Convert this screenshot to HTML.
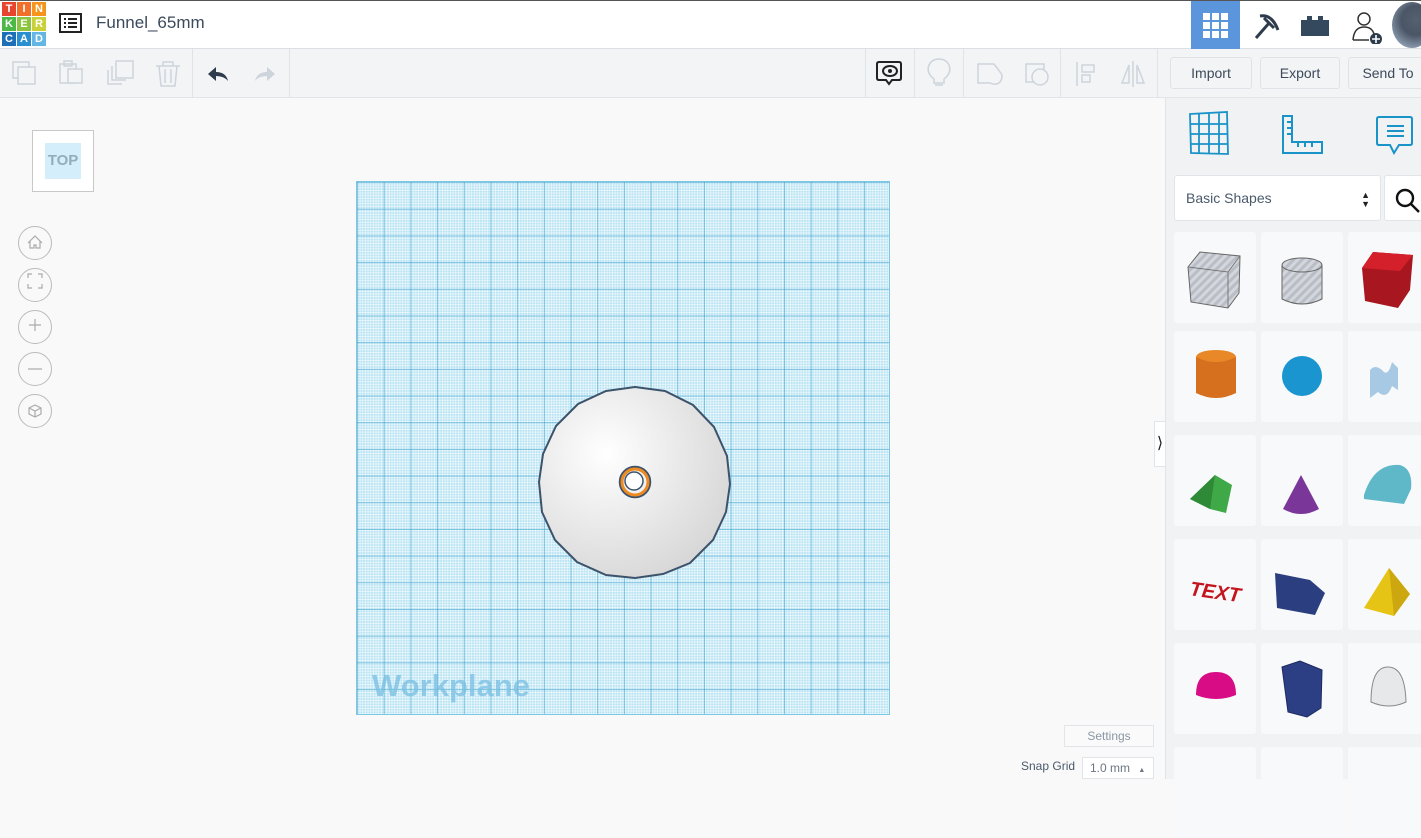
<!DOCTYPE html>
<html><head><meta charset="utf-8"><style>
*{box-sizing:border-box;margin:0;padding:0}
body{width:1421px;height:779px;overflow:hidden;background:#f9f9f9;font-family:"Liberation Sans",sans-serif;position:relative}
.abs{position:absolute}
#top{left:0;top:0;width:1421px;height:49px;background:#fff;border-top:1px solid #555;border-bottom:1px solid #dcdfe3}
#tb{left:0;top:49px;width:1421px;height:49px;background:#f3f4f6;border-bottom:1px solid #e1e4e8}
.logo div{position:absolute;width:14px;height:14px;color:#fff;font-size:11px;font-weight:bold;text-align:center;line-height:14px}
.btn{position:absolute;top:57px;height:32px;border:1px solid #dfe2e6;border-radius:3px;background:#f3f4f6;color:#3c4a5a;font-size:14px;text-align:center;line-height:30px}
.sep{position:absolute;top:49px;width:1px;height:48px;background:#e0e3e7}
#panel{left:1165px;top:98px;width:256px;height:681px;background:#f1f2f4;border-left:1px solid #e1e4e8}
.tile{position:absolute;width:82px;height:91px;background:#f8f9fa;border-radius:3px}
.circ{position:absolute;left:18px;width:34px;height:34px;border:1px solid #bbb;border-radius:50%;background:#f9f9f9}
#grid{left:356px;top:181px;width:534px;height:534px;border:1px solid #7cc7e3;
background-color:#b8e3f3;
background-image:
linear-gradient(to right,rgba(40,150,200,.5) 1px,transparent 1px),
linear-gradient(to bottom,rgba(40,150,200,.5) 1px,transparent 1px),
linear-gradient(to right,rgba(255,255,255,.6) 1px,transparent 1px),
linear-gradient(to bottom,rgba(255,255,255,.6) 1px,transparent 1px);
background-size:26.7px 26.7px,26.7px 26.7px,2.67px 2.67px,2.67px 2.67px}
</style></head><body>
<div id="top" class="abs"></div>
<div class="abs logo" style="left:2px;top:2px;width:44px;height:44px">
<div style="left:0;top:0;background:#e8452f">T</div><div style="left:15px;top:0;background:#f26f2a">I</div><div style="left:30px;top:0;background:#f7941e">N</div>
<div style="left:0;top:15px;background:#4cb848">K</div><div style="left:15px;top:15px;background:#8bc43f">E</div><div style="left:30px;top:15px;background:#c9d13a">R</div>
<div style="left:0;top:30px;background:#1d6fb8">C</div><div style="left:15px;top:30px;background:#2a8fd0">A</div><div style="left:30px;top:30px;background:#64b6e5">D</div>
</div>
<svg class="abs" style="left:59px;top:13px" width="23" height="20"><rect x="1" y="1" width="21" height="18" fill="none" stroke="#222" stroke-width="2"/><g fill="#222"><rect x="5" y="5" width="2" height="2"/><rect x="9" y="5" width="9" height="2"/><rect x="5" y="9" width="2" height="2"/><rect x="9" y="9" width="9" height="2"/><rect x="5" y="13" width="2" height="2"/><rect x="9" y="13" width="9" height="2"/></g></svg>
<div class="abs" style="left:96px;top:13px;font-size:17px;color:#3b4a5c">Funnel_65mm</div>
<div class="abs" style="left:1191px;top:1px;width:49px;height:48px;background:#5b95dc"></div>
<svg class="abs" style="left:1203px;top:13px" width="25" height="25"><g fill="#fff"><rect x="0" y="0" width="7" height="7"/><rect x="9" y="0" width="7" height="7"/><rect x="18" y="0" width="7" height="7"/><rect x="0" y="9" width="7" height="7"/><rect x="9" y="9" width="7" height="7"/><rect x="18" y="9" width="7" height="7"/><rect x="0" y="18" width="7" height="7"/><rect x="9" y="18" width="7" height="7"/><rect x="18" y="18" width="7" height="7"/></g></svg>
<svg class="abs" style="left:1250px;top:10px" width="32" height="32"><path d="M6 28 L20 12 M10 6 Q22 4 28 20 M14 8 L24 18" stroke="#2d3b4c" stroke-width="3" fill="none"/></svg>
<svg class="abs" style="left:1301px;top:14px" width="28" height="22"><path d="M0 6h6v-4h5v4h6v-4h5v4h6v16h-28z" fill="#34495e"/></svg>
<svg class="abs" style="left:1352px;top:10px" width="36" height="34"><circle cx="12" cy="9" r="6" fill="none" stroke="#333" stroke-width="1.5"/><path d="M1 30 Q2 17 12 17 Q20 17 22 24 M1 30h16" fill="none" stroke="#333" stroke-width="1.5"/><circle cx="24" cy="29" r="6" fill="#2d3b4c"/><path d="M24 25v8M20 29h8" stroke="#fff" stroke-width="1.6"/></svg>
<div class="abs" style="left:1392px;top:2px;width:40px;height:46px;border-radius:50%;background:radial-gradient(circle at 60% 40%,#556070 0,#4a5565 40%,#8796aa 75%)"></div>
<div id="tb" class="abs"></div>
<svg class="abs" style="left:0;top:55px" width="300" height="36" fill="none" stroke="#cdd4dc" stroke-width="1.5">
<rect x="13" y="7" width="16" height="16"/><rect x="18" y="12" width="17" height="17" fill="#f3f4f6"/>
<rect x="60" y="9" width="16" height="19"/><rect x="64" y="6" width="8" height="5"/><rect x="68" y="14" width="14" height="14" fill="#f3f4f6"/>
<path d="M108 15v14h14M112 11v14h14"/><rect x="116" y="6" width="17" height="17" fill="#f3f4f6"/>
<path d="M156 11h24M163 11v-4h10v4M159 11l2 20h14l2-20M165 14v14M171 14v14"/>
<path d="M208 19 L216 12 V17 Q226 17 228 26 Q224 21 216 21 V26Z" fill="#2d3b4c" stroke="none"/>
<path d="M275 19 L267 12 V17 Q257 17 255 26 Q259 21 267 21 V26Z" fill="#cdd4dc" stroke="none"/>
</svg>
<div class="sep" style="left:192px"></div><div class="sep" style="left:289px"></div>
<div class="sep" style="left:865px"></div><div class="sep" style="left:914px"></div><div class="sep" style="left:963px"></div><div class="sep" style="left:1060px"></div><div class="sep" style="left:1157px"></div>
<svg class="abs" style="left:870px;top:55px" width="290" height="38" fill="none" stroke="#cdd4dc" stroke-width="1.5">
<path d="M9 7h20q2 0 2 2v14q0 2-2 2h-7l-3 4-3-4h-7q-2 0-2-2v-14q0-2 2-2z" stroke="#222" stroke-width="2"/><ellipse cx="20" cy="16" rx="7" ry="5" stroke="#222" stroke-width="2"/><circle cx="20" cy="16" r="2" fill="#222" stroke="none"/>
<path d="M64 24q-8-6-5-14 3-6 10-6 7 0 10 6 3 8-5 14v4h-10z M65 30h8"/>
<path d="M108 9h16q4 5 6 8 4 4 0 10-4 4-10 1h-12z"/>
<rect x="156" y="9" width="18" height="18"/><circle cx="170" cy="22" r="8" fill="#f3f4f6"/>
<path d="M207 7v24M212 10h12v7h-12zM212 20h8v7h-8z"/>
<path d="M263 6v26M259 28l-7 0 7-18zM267 28h7l-7-18z"/>
</svg>
<div class="btn" style="left:1170px;width:82px">Import</div>
<div class="btn" style="left:1260px;width:80px">Export</div>
<div class="btn" style="left:1348px;width:80px">Send To</div>
<div class="abs" style="left:32px;top:130px;width:62px;height:62px;border:1px solid #c8c8c8;background:#fff"></div>
<div class="abs" style="left:45px;top:143px;width:36px;height:36px;background:#d4eefb;color:#93aebb;font-weight:bold;font-size:15px;text-align:center;line-height:36px">TOP</div>
<div class="circ" style="top:226px"></div><div class="circ" style="top:268px"></div><div class="circ" style="top:310px"></div><div class="circ" style="top:352px"></div><div class="circ" style="top:394px"></div>
<svg class="abs" style="left:18px;top:226px" width="34" height="204" fill="none" stroke="#aaa" stroke-width="1.2">
<path d="M10 17l7-7 7 7M12 15v7h4v-3h2v3h4v-7"/>
<path d="M10 52v-4h4M20 48h4v4M24 58v4h-4M14 62h-4v-4"/>
<path d="M17 93v12M11 99h12"/>
<path d="M10 143h14"/>
<path d="M17 179l6 3v6l-6 3-6-3v-6zM11 182l6 3 6-3M17 185v6"/>
</svg>
<div id="grid" class="abs"></div>
<div class="abs" style="left:372px;top:668px;font-size:31px;font-weight:bold;color:rgba(120,190,225,.75)">Workplane</div>
<svg class="abs" style="left:530px;top:380px" width="210" height="205">
<defs><radialGradient id="g" cx="0.35" cy="0.35" r="0.8"><stop offset="0" stop-color="#fff"/><stop offset="1" stop-color="#d2d2d2"/></radialGradient></defs>
<polygon points="105,7 135,11 163,25 184,47 197,76 200,104 196,132 183,160 160,183 133,194 105,198 76,195 47,182 25,160 12,132 9,102 13,74 26,46 48,24 76,11" fill="url(#g)" stroke="#3c536b" stroke-width="2"/>
<circle cx="105" cy="102" r="15" fill="none" stroke="#3c536b" stroke-width="2.5"/>
<circle cx="105" cy="102" r="13" fill="none" stroke="#ee8a22" stroke-width="3"/>
<circle cx="104" cy="101" r="9" fill="#fff" stroke="#3c536b" stroke-width="1.5"/>
</svg>
<div class="abs" style="left:1064px;top:725px;width:90px;height:22px;border:1px solid #e1e4e8;background:#fafafa;color:#8a96a3;font-size:12px;text-align:center;line-height:20px">Settings</div>
<div class="abs" style="left:1021px;top:759px;font-size:12px;color:#4a5a6b">Snap Grid</div>
<div class="abs" style="left:1082px;top:757px;width:72px;height:22px;border:1px solid #e1e4e8;background:#fff;color:#6a7683;font-size:12px;line-height:20px;padding-left:7px">1.0 mm <span style="font-size:7px;margin-left:5px">▲</span></div>
<div class="abs" style="left:1154px;top:421px;width:12px;height:46px;background:#fff;border:1px solid #e1e4e8;font-size:16px;line-height:44px;text-align:center;color:#222">&#x27E9;</div>
<div id="panel" class="abs"></div>
<svg class="abs" style="left:1185px;top:110px" width="230" height="50" fill="none" stroke="#1a93c9" stroke-width="2">
<path d="M5 4l37-2 1 42-37-1z M5 14h38M5 24h38M5 34h38M14 3v41M24 3v41M34 3v41" stroke-width="1.8"/>
<path d="M98 6h9v26h30v11h-39z M102 12h5M102 18h5M102 24h5M113 32v5M120 32v5M127 32v5"/>
<path d="M194 7h31q2 0 2 2v24q0 2-2 2h-11l-5 8-4-8h-11q-2 0-2-2v-24q0-2 2-2z M202 16h17M202 21h17M202 26h17"/>
</svg>
<div class="abs" style="left:1174px;top:175px;width:207px;height:46px;background:#fff;border:1px solid #e1e4e8;border-radius:3px;color:#4a5a6b;font-size:14px;line-height:44px;padding-left:11px">Basic Shapes<span style="position:absolute;right:10px;top:0;font-size:9px;line-height:9px;margin-top:15px;color:#222">▲<br>▼</span></div>
<div class="abs" style="left:1384px;top:175px;width:40px;height:46px;background:#fff;border:1px solid #e1e4e8;border-radius:3px"></div>
<svg class="abs" style="left:1394px;top:187px" width="27" height="26" fill="none" stroke="#111" stroke-width="2.4"><circle cx="11" cy="11" r="8"/><path d="M17 17l8 8"/></svg>
<div class="tile" style="left:1174px;top:232px"></div><div class="tile" style="left:1261px;top:232px"></div><div class="tile" style="left:1348px;top:232px"></div>
<div class="tile" style="left:1174px;top:331px"></div><div class="tile" style="left:1261px;top:331px"></div><div class="tile" style="left:1348px;top:331px"></div>
<div class="tile" style="left:1174px;top:435px"></div><div class="tile" style="left:1261px;top:435px"></div><div class="tile" style="left:1348px;top:435px"></div>
<div class="tile" style="left:1174px;top:539px"></div><div class="tile" style="left:1261px;top:539px"></div><div class="tile" style="left:1348px;top:539px"></div>
<div class="tile" style="left:1174px;top:643px"></div><div class="tile" style="left:1261px;top:643px"></div><div class="tile" style="left:1348px;top:643px"></div>
<div class="tile" style="left:1174px;top:747px"></div><div class="tile" style="left:1261px;top:747px"></div><div class="tile" style="left:1348px;top:747px"></div>
<svg class="abs" style="left:1160px;top:230px" width="261" height="549">
<defs><pattern id="st" width="6" height="6" patternUnits="userSpaceOnUse" patternTransform="rotate(45)"><rect width="6" height="6" fill="#d3d6dc"/><rect width="3" height="6" fill="#b9bdc5"/></pattern></defs>
<polygon points="28,37 40,22 80,26 79,63 68,78 31,72" fill="url(#st)" stroke="#666"/><path d="M28 37l40 5 12-16M68 42v36" fill="none" stroke="#777"/>
<path d="M122 35v34q20 10 40 0v-34" fill="url(#st)" stroke="#666"/><ellipse cx="142" cy="35" rx="20" ry="7" fill="url(#st)" stroke="#666"/>
<polygon points="202,38 213,22 253,25 250,60 238,78 205,71" fill="#a8161f"/><polygon points="202,38 213,22 253,25 240,41" fill="#d4202a"/>
<ellipse cx="56" cy="127" rx="20" ry="7" fill="#e88828"/><path d="M36 127v36q20 10 40 0v-36q-20 10-40 0" fill="#d7701e"/>
<circle cx="142" cy="146" r="20" fill="#1a95cf"/>
<path d="M210 140q5-6 12 0 6 8 10-8l6 6v22l-6-4q-5 14-14 6l-8 6z" fill="#a8c9e3"/>
<polygon points="30,269 55,245 72,255 66,283 50,279" fill="#3fa847"/><polygon points="30,269 55,245 50,279" fill="#2f8a38"/>
<path d="M141 245l-18 34q18 10 36 0z" fill="#7a3799"/>
<path d="M204 265q10-32 36-30 13 4 11 24l-7 15-40-5z" fill="#5fb8c7"/>
<text x="30" y="368" font-family="Liberation Sans" font-weight="bold" font-style="italic" font-size="20" fill="#c4151f" transform="rotate(8 50 360)">TEXT</text>
<polygon points="115,343 150,350 165,363 155,385 117,378" fill="#2b3f80"/>
<polygon points="229,338 204,378 234,386 250,364" fill="#e6c415"/><polygon points="229,338 250,364 234,386" fill="#cda70f"/>
<path d="M36 465q0-23 20-23 20 0 20 23q-20 8-40 0z" fill="#d80d85"/>
<polygon points="122,437 140,431 162,440 161,478 147,487 128,482" fill="#2c3f85" stroke="#1c2a60"/>
<path d="M211 472q0-35 17-35 17 0 18 35q-17 8-35 0z" fill="#e6e8ea" stroke="#888"/>
</svg>
</body></html>
